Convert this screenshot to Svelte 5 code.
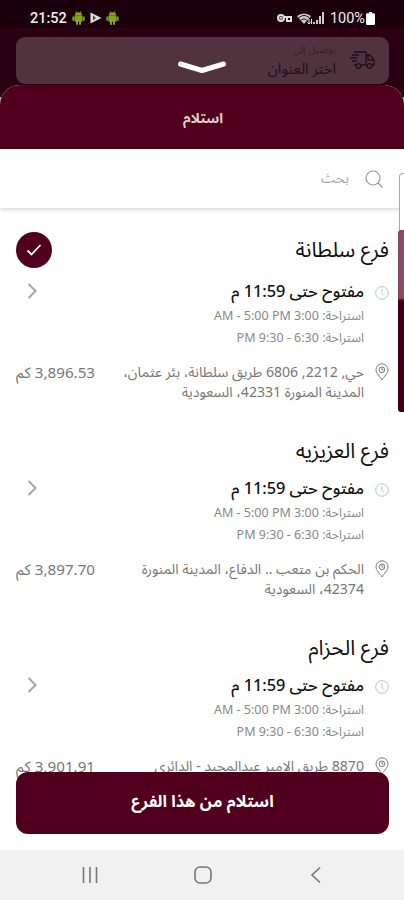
<script lang="ts">
	type Branch = {
		name: string;
		until: string;
		breaks: string[];
		address: string[];
		distance: string;
	};

	const breaks = ['استراحة: 3:00 AM - 5:00 PM', 'استراحة: 6:30 - 9:30 PM'];

	const branches: Branch[] = [
		{
			name: 'فرع سلطانة',
			until: 'مفتوح حتى 11:59 م',
			breaks,
			address: ['حي, 2212, 6806 طريق سلطانة، بئر عثمان،', 'المدينة المنورة 42331، السعودية'],
			distance: '3,896.53 كم'
		},
		{
			name: 'فرع العزيزيه',
			until: 'مفتوح حتى 11:59 م',
			breaks,
			address: ['الحكم بن متعب .. الدفاع، المدينة المنورة', '42374، السعودية'],
			distance: '3,897.70 كم'
		},
		{
			name: 'فرع الحزام',
			until: 'مفتوح حتى 11:59 م',
			breaks,
			address: ['8870 طريق الامير عبدالمجيد - الدائري'],
			distance: '3,901.91 كم'
		}
	];

	let selected = $state(0);
</script>

{#snippet android()}
	<svg class="android" viewBox="0 0 12 13">
		<path
			d="M2.500 4.400a3.500 3.200 0 0 1 7 0zM2.500 4.600h7v5.400h-7zM.3 5h1.900v4H.3zM9.800 5h1.900v4H9.800zM3.700 9h1.800v3.800H3.700zM6.500 9h1.800v3.800H6.500z"
			fill="#7ea51c"
		/>
		<path d="M3.500 .2l1 1.800M8.500 .2l-1 1.800" stroke="#7ea51c" stroke-width=".8" />
	</svg>
{/snippet}

<div class="screen" dir="rtl">
	<div class="status" dir="ltr">
		<div class="group">
			<span class="time">21:52</span>
			{@render android()}
			<svg class="play" viewBox="0 0 12 12">
				<path d="M.5 .5L11.500 6 .5 11.500z" fill="#ddd" />
				<path d="M3 3.500v5l3-2.500z" fill="#5b454d" />
			</svg>
			{@render android()}
		</div>
		<div class="group">
			<svg class="key" viewBox="0 0 16 10" fill="none" stroke="#ddd" stroke-width="2">
				<circle cx="4" cy="5" r="3" />
				<circle cx="4" cy="5" r=".5" />
				<path d="M7 4h8M10 4v4h4V4" />
			</svg>
			<svg class="wifi" viewBox="0 0 16 13">
				<path d="M0 4a11 11 0 0 1 14 0L7 12z" fill="#ccc" />
				<path d="M2 5.500a8 8 0 0 1 10 0M4.300 8a4 4 0 0 1 5.400 0" fill="none" stroke="#2a0a16" />
				<path d="M12 7v5M10.500 10.500L12 12l1.500-1.500M14.500 12V7" fill="none" stroke="#eee" />
			</svg>
			<svg class="signal" viewBox="0 0 12 12">
				<path d="M0 10h2v2H0zM3 8h2v4H3zM6 4h2v8H6zM9 0h2v12H9z" fill="#ccc" />
			</svg>
			<span class="percent">100%</span>
			<svg class="battery" viewBox="0 0 9 13">
				<path d="M3 0h3v1.500H3z" fill="#fff" />
				<rect y="1.200" width="9" height="11.800" rx="1.300" fill="#fff" />
			</svg>
		</div>
	</div>

	<div class="backdrop">
		<div class="delivery">
			<svg class="truck" viewBox="0 0 26 20" fill="none" stroke="#21101a" stroke-width="1.300">
				<path d="M4 2h12v13H11M16 5h4l4 5v5h-2M4 15h2M2 5h7M0 8h7M2 11h5M18 5v5h6" />
				<circle cx="8.500" cy="16" r="2.300" />
				<circle cx="19.500" cy="16" r="2.300" />
			</svg>
			<div>
				<div class="hint">توصيل إلى</div>
				<div class="place">اختر العنوان</div>
			</div>
		</div>
		<svg class="handle" viewBox="0 0 50 16">
			<path d="M3.500 4L25 10.500 46.500 4" />
		</svg>
	</div>

	<main class="sheet">
		<h1>استلام</h1>

		<div class="search">
			<svg viewBox="0 0 20 20" fill="none" stroke="#999" stroke-width="1.200">
				<circle cx="9" cy="9" r="7" />
				<path d="M14 14L18.500 18.500" />
			</svg>
			<span>بحث</span>
		</div>

		<div class="list">
			{#each branches as branch, i}
				<section class="branch">
					<div class="title">
						<h2>{branch.name}</h2>
						{#if i === selected}
							<svg class="check" viewBox="0 0 36 36">
								<circle cx="18" cy="18" r="18" fill="#50001c" />
								<path d="M11.500 18.500l4 4 9-9.500" fill="none" stroke="#fff" stroke-width="1.800" />
							</svg>
						{/if}
					</div>
					<button class="hours" onclick={() => (selected = i)}>
						<svg class="clock" viewBox="0 0 14 14" fill="none" stroke="#a9cfad">
							<circle cx="7" cy="7" r="6.300" />
							<path d="M7 3v4.500l2 2" />
						</svg>
						<span class="until">{branch.until}</span>
						<svg class="chevron" viewBox="0 0 10 16">
							<path d="M1.500 1l7 7-7 7" fill="none" stroke="#a5a5a5" stroke-width="2" />
						</svg>
					</button>
					{#each branch.breaks as pause}
						<div class="break">{pause}</div>
					{/each}
					<div class="where">
						<svg class="pin" viewBox="0 0 14 18" fill="none" stroke="#777">
							<path d="M7 17C5 13.500 1 10.500 1 6.800a6 6 0 0 1 12 0C13 10.500 9 13.500 7 17z" />
							<circle cx="7" cy="6.800" r="2.800" />
							<path d="M7 5v2h1.500" />
						</svg>
						<div class="address">
							{#each branch.address as line}
								<div>{line}</div>
							{/each}
						</div>
						<div class="distance">{branch.distance}</div>
					</div>
				</section>
			{/each}
		</div>
		<button class="confirm">استلام من هذا الفرع</button>
	</main>

	<nav class="keys" dir="ltr">
		<svg viewBox="0 0 20 20"><path d="M3.500 2v16M10 2v16M16.500 2v16" /></svg>
		<svg viewBox="0 0 20 20"><rect x="2" y="2" width="16" height="16" rx="5" /></svg>
		<svg viewBox="0 0 20 20"><path d="M14 2.500L6 10l8 7.500" /></svg>
	</nav>

	<div class="edge">
		<div class="tab"></div>
		<div class="panel"></div>
	</div>
</div>

<style>
	:global(body) {
		background: #fff;
	}

	.screen {
		position: relative;
		display: flex;
		flex-direction: column;
		width: 404px;
		height: 900px;
		overflow: hidden;
		background: linear-gradient(#2b0011 97px, #b5b5b5 97px);
		font-family: 'Noto Sans', 'Noto Sans Arabic', 'DejaVu Sans', sans-serif;
		color: #111;
	}

	svg {
		display: block;
		flex: none;
	}

	.status {
		display: flex;
		justify-content: space-between;
		align-items: center;
		height: 28px;
		box-sizing: border-box;
		padding: 8px 29px 0 30px;
		background: #1b000b;
		font-family: Roboto, sans-serif;
		font-size: 14.5px;
		color: #eee;
	}

	.group {
		display: flex;
		align-items: center;
	}

	.time {
		font-weight: 500;
		margin-right: 5px;
	}

	.android {
		width: 13px;
		height: 14px;
	}

	.play {
		width: 12px;
		height: 12px;
		margin: 0 4px 0 5px;
	}

	.key {
		width: 16px;
		height: 10px;
		margin-right: 4px;
	}

	.wifi {
		width: 16px;
		height: 13px;
	}

	.signal {
		width: 12px;
		height: 12px;
		margin-right: 5px;
	}

	.percent {
		margin-right: 1px;
	}

	.battery {
		width: 9px;
		height: 13px;
	}

	.backdrop {
		position: relative;
		height: 57px;
		box-sizing: border-box;
		padding: 9px 15px 0 16px;
	}

	.delivery {
		display: flex;
		gap: 14px;
		height: 47px;
		box-sizing: border-box;
		padding: 3px 13px 0;
		border-radius: 9px;
		background: #50333d;
		color: #21101a;
	}

	.truck {
		width: 26px;
		height: 20px;
		margin-top: 10px;
	}

	.hint {
		font-size: 10px;
		line-height: 18px;
		color: #36202a;
	}

	.place {
		font-size: 14.8px;
		line-height: 20px;
	}

	.handle {
		position: absolute;
		left: 177px;
		top: 32px;
		width: 50px;
		height: 16px;
		fill: none;
		stroke: #fff;
		stroke-width: 5;
		stroke-linecap: round;
		stroke-linejoin: round;
	}

	.sheet {
		position: relative;
		flex: 1;
		min-height: 0;
		display: flex;
		flex-direction: column;
		border-radius: 20px 20px 0 0;
		overflow: hidden;
		background: #fff;
	}

	h1 {
		flex: none;
		height: 64px;
		margin: 0;
		padding-left: 2px;
		background: #50001c;
		color: #ded0d5;
		font-size: 14px;
		line-height: 65px;
		text-align: center;
	}

	.search {
		flex: none;
		display: flex;
		align-items: center;
		gap: 15px;
		height: 59px;
		padding: 0 20px;
		font-size: 14px;
		color: #aaa;
		box-shadow: 0 1px 5px #0003;
	}

	.search svg {
		width: 20px;
		height: 20px;
	}

	.list {
		flex: 1;
		min-height: 0;
		overflow: hidden;
		padding: 21px 15px 0 16px;
	}

	.branch {
		height: 197px;
	}

	.title {
		display: flex;
		align-items: center;
		justify-content: space-between;
		height: 42px;
		box-sizing: border-box;
	}

	.branch + .branch .title {
		padding-top: 7px;
	}

	h2 {
		margin: 0;
		font-size: 21px;
		font-weight: 400;
	}

	.check {
		width: 36px;
		height: 36px;
	}

	.hours {
		display: flex;
		align-items: center;
		width: 100%;
		height: 28px;
		margin: 6px 0 0;
		padding: 0 0 0 11px;
		border: 0;
		background: none;
		font: inherit;
		color: inherit;
	}

	.clock {
		width: 14px;
		height: 14px;
		margin-top: 3px;
	}

	.until {
		margin: 0 11px 0 auto;
		padding-top: 1px;
		font-size: 16.3px;
		font-weight: 500;
	}

	.chevron {
		width: 10px;
		height: 16px;
	}

	.break {
		height: 22px;
		padding-right: 25px;
		font-size: 12.5px;
		line-height: 22px;
		color: #888;
	}

	.where {
		display: flex;
		margin-top: 13px;
		font-size: 14.1px;
		line-height: 20px;
		color: #777;
		white-space: nowrap;
	}

	.pin {
		width: 14px;
		height: 18px;
		margin: 1px 0 0 11px;
	}

	.address {
		flex: 1;
	}

	.distance {
		font-size: 15.2px;
	}

	.confirm {
		position: absolute;
		left: 16px;
		right: 15px;
		bottom: 66px;
		height: 62px;
		padding: 0 0 3px;
		border: 0;
		border-radius: 12px;
		background: #50001c;
		color: #fff;
		font: bold 16.4px 'Noto Sans', 'Noto Sans Arabic', 'DejaVu Sans', sans-serif;
	}

	.keys {
		position: absolute;
		inset: auto 0 0;
		display: flex;
		justify-content: space-between;
		align-items: center;
		height: 50px;
		box-sizing: border-box;
		padding: 0 78px 0 80px;
		background: #f1f1f1;
	}

	.keys svg {
		width: 20px;
		height: 20px;
		fill: none;
		stroke: #777;
		stroke-width: 1.6;
	}

	/* page peeking out from the right side */
	.edge {
		position: absolute;
		right: 0;
		top: 173px;
		width: 6px;
	}

	.tab {
		height: 56px;
		margin-right: -2px;
		margin-left: 1px;
		border: solid #aaa;
		border-width: 1px 0 0 1px;
		border-top-left-radius: 4px;
		background: #fff;
	}

	.panel {
		height: 182px;
		border-radius: 3px 0 0 3px;
		background: linear-gradient(#854a64 68px, #3d0016 71px);
	}
</style>
